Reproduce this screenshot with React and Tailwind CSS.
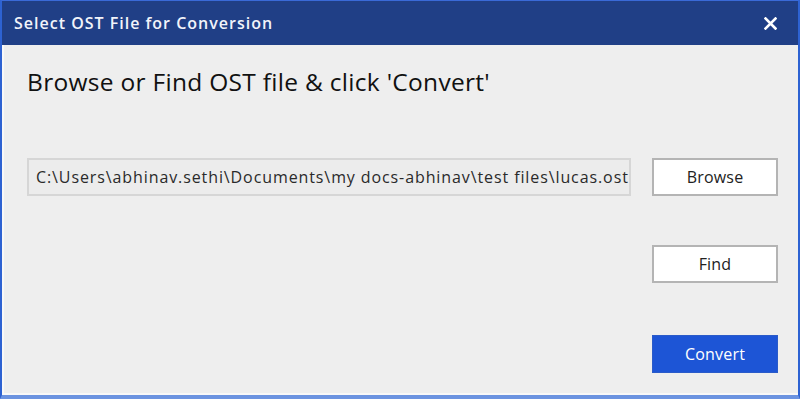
import React from 'react';

const font = { fontFamily: '"Open Sans", "Noto Sans", sans-serif' };

function DialogButton({ children, primary }) {
    return (
        <button
            type="button"
            className={`w-[126px] h-[38px] flex items-center justify-center text-[16px] tracking-[0.2px] ${primary ? 'bg-[#1d55d6] border border-[#2a5bc9] text-white' : 'bg-white border-2 border-[#b4b4b4] text-[#222]'}`}
        >
            {children}
        </button>
    );
}

export default function App() {
    return (
        <div className="w-[800px] h-[399px] flex flex-col bg-[#2d62d2] border-t border-[#3a6ad8] border-x-2 border-b-[4px] border-x-[#2d62d2] border-b-[#6b93e0]" style={font}>
            {/* title bar */}
            <div className="h-[44px] shrink-0 bg-[#203f86] flex items-center justify-between pl-[12px] pr-[21px]">
                <span className="text-[#f2f4fa] text-[16px] font-semibold tracking-[1px]">Select OST File for Conversion</span>
                <svg width="13" height="13" viewBox="0 0 13 13">
                    <path d="M1.5 1.5 L11.5 11.5 M11.5 1.5 L1.5 11.5" stroke="white" strokeWidth="2.6" strokeLinecap="square" />
                </svg>
            </div>

            {/* body */}
            <div className="flex-1 flex flex-col bg-[#eeeeee] border-l-2 border-b-2 border-[#f8f8f8] pl-[23px] pr-[20px]">
                <h1 className="mt-[20px] text-[24.5px] leading-[34px] text-[#111] tracking-[0.3px]">
                    Browse or Find OST file &amp; click 'Convert'
                </h1>

                <div className="mt-[59px] flex items-center justify-between">
                    <div className="w-[604px] h-[38px] flex items-center border-2 border-[#d6d6d6] bg-[#ececec] pl-[7px] text-[16px] text-[#2a2a2a] tracking-[0.9px]">
                        C:\Users\abhinav.sethi\Documents\my docs-abhinav\test files\lucas.ost
                    </div>
                    <DialogButton>Browse</DialogButton>
                </div>

                <div className="mt-[49px] flex justify-end">
                    <DialogButton>Find</DialogButton>
                </div>

                <div className="mt-[52px] flex justify-end">
                    <DialogButton primary>Convert</DialogButton>
                </div>
            </div>
        </div>
    );
}
